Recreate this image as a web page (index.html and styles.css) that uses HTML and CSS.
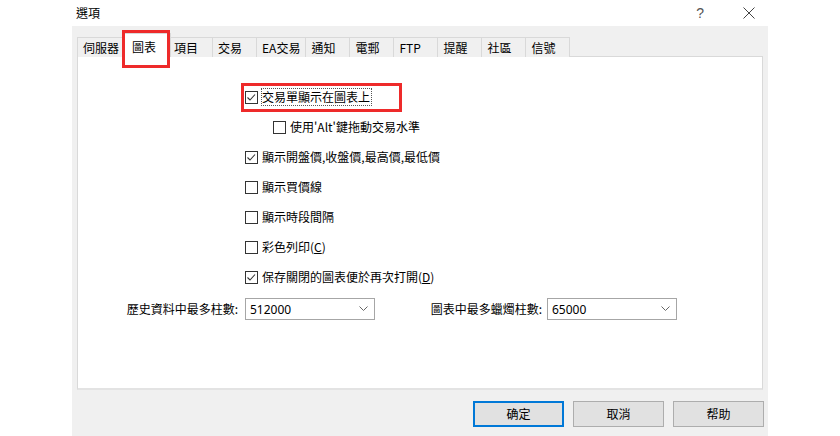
FILE: index.html
```html
<!DOCTYPE html>
<html lang="zh-Hant">
<head>
<meta charset="utf-8">
<title>選項</title>
<link rel="stylesheet" href="styles.css">
</head>
<body>
<div class="titlebar">
  <span class="title">選項</span>
  <span class="help">?</span>
  <svg class="close" width="12" height="12" viewBox="0 0 12 12"><path d="M0.5 0.5 L11.5 11.5 M11.5 0.5 L0.5 11.5" stroke="#444" stroke-width="1" fill="none"/></svg>
</div>
<div class="dialog">
  <div class="tabs">
    <div class="tab">伺服器</div>
    <div class="tab active">圖表<span class="mark mark-tab"></span></div>
    <div class="tab">項目</div>
    <div class="tab">交易</div>
    <div class="tab">EA交易</div>
    <div class="tab">通知</div>
    <div class="tab">電郵</div>
    <div class="tab">FTP</div>
    <div class="tab">提醒</div>
    <div class="tab">社區</div>
    <div class="tab">信號</div>
  </div>
  <div class="panel">
    <div class="options">
      <div class="row">
        <span class="box checked"><svg width="13" height="13" viewBox="0 0 13 13"><polyline points="2.5,6.5 5,9 10,3.5" fill="none" stroke="#333" stroke-width="1.1"/></svg></span>
        <span class="label focus">交易單顯示在圖表上</span>
        <span class="mark mark-row"></span>
      </div>
      <div class="row indent">
        <span class="box"></span>
        <span class="label">使用'Alt'鍵拖動交易水準</span>
      </div>
      <div class="row">
        <span class="box checked"><svg width="13" height="13" viewBox="0 0 13 13"><polyline points="2.5,6.5 5,9 10,3.5" fill="none" stroke="#333" stroke-width="1.1"/></svg></span>
        <span class="label">顯示開盤價,收盤價,最高價,最低價</span>
      </div>
      <div class="row">
        <span class="box"></span>
        <span class="label">顯示買價線</span>
      </div>
      <div class="row">
        <span class="box"></span>
        <span class="label">顯示時段間隔</span>
      </div>
      <div class="row">
        <span class="box"></span>
        <span class="label">彩色列印(<u>C</u>)</span>
      </div>
      <div class="row">
        <span class="box checked"><svg width="13" height="13" viewBox="0 0 13 13"><polyline points="2.5,6.5 5,9 10,3.5" fill="none" stroke="#333" stroke-width="1.1"/></svg></span>
        <span class="label">保存關閉的圖表便於再次打開(<u>D</u>)</span>
      </div>
    </div>
    <div class="fields">
      <div class="field first">
        <span class="flabel">歷史資料中最多柱數:</span>
        <div class="select"><span>512000</span><svg width="9" height="6" viewBox="0 0 9 6"><polyline points="0.5,0.5 4.5,4.5 8.5,0.5" fill="none" stroke="#666" stroke-width="1"/></svg></div>
      </div>
      <div class="field second">
        <span class="flabel">圖表中最多蠟燭柱數:</span>
        <div class="select"><span>65000</span><svg width="9" height="6" viewBox="0 0 9 6"><polyline points="0.5,0.5 4.5,4.5 8.5,0.5" fill="none" stroke="#666" stroke-width="1"/></svg></div>
      </div>
    </div>
  </div>
  <div class="buttons">
    <button class="btn default">确定</button>
    <button class="btn">取消</button>
    <button class="btn">帮助</button>
  </div>
</div>
</body>
</html>
```
FILE: styles.css
```css
* { box-sizing: border-box; }
html, body { margin: 0; padding: 0; }
body {
  width: 840px;
  height: 436px;
  background: #ffffff;
  font-family: "Noto Sans CJK TC", "Noto Sans", sans-serif;
  font-size: 12px;
  color: #000;
  overflow: hidden;
}
.titlebar {
  height: 26px;
  display: flex;
  align-items: center;
  position: relative;
}
.title {
  margin-left: 76px;
  font-size: 12px;
  line-height: 14px;
}
.help {
  margin-left: auto;
  margin-right: 39px;
  font-family: "Liberation Sans", sans-serif;
  font-size: 14px;
  color: #555;
  line-height: 14px;
}
.close {
  margin-right: 85px;
  display: block;
}
.dialog {
  margin-left: 72px;
  width: 696px;
  height: 410px;
  background: #f0f0f0;
  padding: 7px 4px 0 5px;
  display: flex;
  flex-direction: column;
}
.tabs {
  height: 24px;
  display: flex;
  align-items: flex-end;
  position: relative;
  z-index: 2;
}
.tab {
  height: 20px;
  min-width: 44px;
  padding: 0 5px 0 5px;
  border: 1px solid #d9d9d9;
  border-bottom: none;
  border-left: none;
  background: #f0f0f0;
  line-height: 19px;
  white-space: nowrap;
  position: relative;
}
.tab:first-child { border-left: 1px solid #d9d9d9; padding-left: 5px; }
.tab.active {
  height: 24px;
  margin: 0 -2px 0 -2px;
  padding-left: 8px;
  min-width: 48px;
  background: #fff;
  border-left: 1px solid #d9d9d9;
  line-height: 26px;
  z-index: 3;
}
.mark {
  position: absolute;
  border: 3px solid #ee2a2a;
  pointer-events: none;
}
.mark-tab {
  left: -2px;
  top: -4px;
  width: 48px;
  height: 38px;
}
.panel {
  width: 686px;
  height: 334px;
  margin-top: -1px;
  background: #fff;
  border: 1px solid #d9d9d9;
  border-bottom: 2px solid #e3e3e3;
  position: relative;
  z-index: 1;
}
.options {
  padding-top: 25px;
  padding-left: 167px;
}
.row {
  height: 30px;
  display: flex;
  align-items: center;
  position: relative;
}
.row.indent { padding-left: 28px; }
.box {
  width: 13px;
  height: 13px;
  border: 1px solid #333;
  background: #fff;
  display: flex;
  align-items: center;
  justify-content: center;
  flex: none;
}
.box svg { display: block; margin: -1px; }
.label {
  margin-left: 4px;
  line-height: 16px;
  white-space: nowrap;
}
.label.focus {
  outline: 1px dotted #555;
  outline-offset: 0;
  padding-right: 1px;
}
.mark-row {
  left: -4px;
  top: 1px;
  width: 161px;
  height: 29px;
}
.fields {
  margin-top: 6px;
  display: flex;
  align-items: center;
}
.field { display: flex; align-items: center; }
.field.first .flabel { width: 160px; }
.field.second { margin-left: 55px; }
.field.second .flabel { width: 112px; margin-right: 5px; }
.flabel {
  text-align: right;
  margin-right: 7px;
  white-space: nowrap;
  line-height: 16px;
}
.select {
  width: 130px;
  height: 22px;
  border: 1px solid #a6a6a6;
  background: #fff;
  display: flex;
  align-items: center;
  justify-content: space-between;
  padding: 0 6px 0 4px;
  font-family: "Noto Sans", "Noto Sans CJK TC", sans-serif;
  font-size: 12px;
}
.select svg { display: block; }
.buttons {
  margin-top: 11px;
  display: flex;
  justify-content: flex-end;
  gap: 9px;
}
.btn {
  width: 91px;
  height: 26px;
  background: #e1e1e1;
  border: 1px solid #adadad;
  font-family: "Noto Sans CJK SC", "Noto Sans CJK TC", sans-serif;
  font-size: 12px;
  color: #000;
  padding: 0;
  line-height: 16px;
}
.btn.default {
  border: 1px solid #0078d7;
  box-shadow: inset 0 0 0 1px #0078d7;
}
```
